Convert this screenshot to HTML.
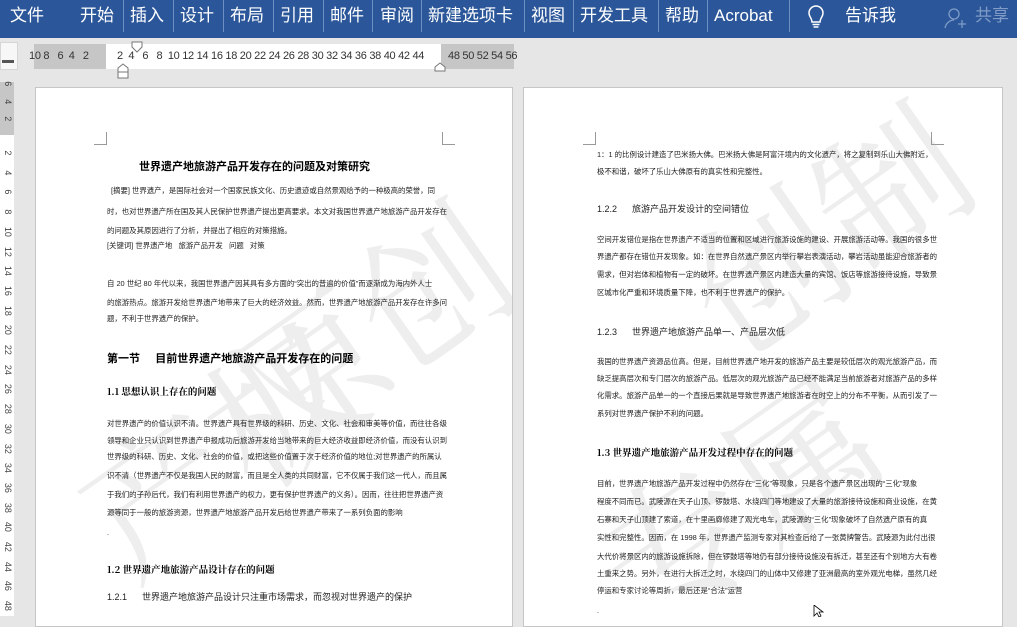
<!DOCTYPE html>
<html><head><meta charset="utf-8"><style>
*{margin:0;padding:0;box-sizing:border-box}
body{width:1017px;height:616px;overflow:hidden;background:#e6e6e6;position:relative;font-family:"Liberation Sans","Noto Sans CJK SC",sans-serif}
.rib{position:absolute;left:0;top:0;width:1017px;height:38px;background:#2b579a}
.tab{position:absolute;top:5px;color:#fff;font-size:17px;line-height:22px;white-space:nowrap}
.sep{position:absolute;top:0;width:1px;height:32px;background:#6d8fc2}
.ab{position:absolute;white-space:nowrap}
.rn{position:absolute;top:50px;font-size:11px;color:#333;white-space:nowrap;letter-spacing:-0.3px}
.page{position:absolute;top:87px;background:#fff;border:1px solid #c6c6c6;height:540px}
.t{position:absolute;font-size:7.4px;color:#222;white-space:nowrap;line-height:10px}
.h{position:absolute;white-space:nowrap;color:#000;font-weight:bold}
.wm{position:absolute;color:#eeeeee;font-size:150px;font-family:"Noto Serif CJK SC",serif;white-space:nowrap;transform:rotate(-35deg);line-height:1}
.cm{position:absolute;border-color:#999;border-style:solid;width:13px;height:13px}
.vr div{transform:rotate(90deg)}
</style></head><body>
<div class="rib">
<div class="tab" style="left:10px">文件</div>
<div class="tab" style="left:80px">开始</div><div class="sep" style="left:123px"></div>
<div class="tab" style="left:130px">插入</div><div class="sep" style="left:173px"></div>
<div class="tab" style="left:180px">设计</div><div class="sep" style="left:223px"></div>
<div class="tab" style="left:230px">布局</div><div class="sep" style="left:273px"></div>
<div class="tab" style="left:280px">引用</div><div class="sep" style="left:323px"></div>
<div class="tab" style="left:330px">邮件</div><div class="sep" style="left:372px"></div>
<div class="tab" style="left:380px">审阅</div><div class="sep" style="left:421px"></div>
<div class="tab" style="left:428px">新建选项卡</div><div class="sep" style="left:524px"></div>
<div class="tab" style="left:531px">视图</div><div class="sep" style="left:573px"></div>
<div class="tab" style="left:580px">开发工具</div><div class="sep" style="left:658px"></div>
<div class="tab" style="left:665px">帮助</div><div class="sep" style="left:707px"></div>
<div class="tab" style="left:714px">Acrobat</div><div class="sep" style="left:789px"></div>
<svg class="ab" style="left:806px;top:5px" width="20" height="24" viewBox="0 0 20 24"><path d="M6 17c0-4-3-5-3-9a7 7 0 0 1 14 0c0 4-3 5-3 9z M6.5 19.5h7 M7.5 22h5" fill="none" stroke="#fff" stroke-width="1.5"/></svg>
<div class="tab" style="left:845px">告诉我</div>
<svg class="ab" style="left:943px;top:6px" width="24" height="24" viewBox="0 0 24 24"><circle cx="11" cy="8" r="5" fill="none" stroke="#7f9bc6" stroke-width="1.3"/><path d="M2 22c1-5 5-8 9-8 M15 18h8 M19 14v8" fill="none" stroke="#7f9bc6" stroke-width="1.3"/></svg>
<div class="tab" style="left:975px;color:#7f9bc6">共享</div>
</div>
<div class="ab" style="left:0;top:42px;width:18px;height:28px;background:#f7f7f7;border:1px solid #d6d6d6"></div>
<div class="ab" style="left:2px;top:60px;width:12px;height:3px;background:#555"></div>
<div class="ab" style="left:34px;top:44px;width:72px;height:25px;background:#c6c6c6"></div>
<div class="ab" style="left:106px;top:44px;width:335px;height:25px;background:#fff"></div>
<div class="ab" style="left:441px;top:44px;width:73px;height:25px;background:#c6c6c6"></div>
<div class="rn" style="left:29px">10 8 &nbsp; 6 &nbsp;4 &nbsp; 2</div>
<div class="rn" style="left:117px">2 &nbsp;4 &nbsp; 6 &nbsp; 8 &nbsp;10 12 14 16 18 20 22 24 26 28 30 32 34 36 38 40 42 44</div>
<div class="rn" style="left:448px">48 50 52 54 56</div>
<svg class="ab" style="left:115px;top:41px" width="30" height="38"><path d="M17 1h10v5l-5 5-5-5z" fill="#fff" stroke="#777"/><path d="M3 27l5-4 5 4v4H3z M3 31h10v6H3z" fill="#fff" stroke="#777"/></svg>
<svg class="ab" style="left:433px;top:60px" width="16" height="12"><path d="M2 11V7l5-4 5 4v4z" fill="#fff" stroke="#777"/></svg>
<div class="ab" style="left:0;top:82px;width:14px;height:53px;background:#c6c6c6"></div>
<div class="ab" style="left:0;top:135px;width:14px;height:481px;background:#fff"></div>
<div class="vr" style="position:absolute;left:1px;top:75px;width:12px;font-size:9px;color:#444;line-height:17.5px;text-align:center">
<div>6</div><div>4</div><div>2</div>
</div>
<div class="vr" style="position:absolute;left:1px;top:143px;width:12px;font-size:9px;color:#444;line-height:19.7px;text-align:center">
<div>2</div><div>4</div><div>6</div><div>8</div><div>10</div><div>12</div><div>14</div><div>16</div><div>18</div><div>20</div><div>22</div><div>24</div><div>26</div><div>28</div><div>30</div><div>32</div><div>34</div><div>36</div><div>38</div><div>40</div><div>42</div><div>44</div><div>46</div><div>48</div>
</div>
<div class="page" style="left:35px;width:478px;overflow:hidden">
<div class="wm" style="left:30px;top:280px">产权</div>
<div class="wm" style="left:180px;top:160px">原创</div>
</div>
<div class="cm" style="left:94px;top:132px;border-width:0 1px 1px 0"></div>
<div class="cm" style="left:442px;top:132px;border-width:0 0 1px 1px"></div>
<div class="h" style="left:139px;top:158px;font-size:11px">世界遗产地旅游产品开发存在的问题及对策研究</div>
<div class="t" style="left:111px;top:186px">[摘要] 世界遗产，是国际社会对一个国家民族文化、历史遗迹或自然景观给予的一种极高的荣誉，同</div>
<div class="t" style="left:107px;top:207px">时，也对世界遗产所在国及其人民保护世界遗产提出更高要求。本文对我国世界遗产地旅游产品开发存在</div>
<div class="t" style="left:107px;top:226px">的问题及其原因进行了分析，并提出了相应的对策措施。</div>
<div class="t" style="left:107px;top:241px">[关键词] 世界遗产地 &nbsp; 旅游产品开发 &nbsp; 问题 &nbsp; 对策</div>
<div class="t" style="left:107px;top:279px">自 20 世纪 80 年代以来，我国世界遗产因其具有多方面的“突出的普遍的价值”而逐渐成为海内外人士</div>
<div class="t" style="left:107px;top:298px">的旅游热点。旅游开发给世界遗产地带来了巨大的经济效益。然而，世界遗产地旅游产品开发存在许多问</div>
<div class="t" style="left:107px;top:314px">题，不利于世界遗产的保护。</div>
<div class="h" style="left:107px;top:350px;font-size:11px">第一节&nbsp;&nbsp;&nbsp;&nbsp; 目前世界遗产地旅游产品开发存在的问题</div>
<div class="h" style="left:107px;top:384px;font-size:9.5px;font-family:'Noto Serif CJK SC',serif">1.1 思想认识上存在的问题</div>
<div class="t" style="left:107px;top:419px">对世界遗产的价值认识不清。世界遗产具有世界级的科研、历史、文化、社会和审美等价值，而往往各级</div>
<div class="t" style="left:107px;top:436px">领导和企业只认识到世界遗产申报成功后旅游开发给当地带来的巨大经济收益即经济价值，而没有认识到</div>
<div class="t" style="left:107px;top:452px">世界级的科研、历史、文化、社会的价值，或把这些价值置于次于经济价值的地位;对世界遗产的所属认</div>
<div class="t" style="left:107px;top:471px">识不清（世界遗产不仅是我国人民的财富，而且是全人类的共同财富，它不仅属于我们这一代人，而且属</div>
<div class="t" style="left:107px;top:490px">于我们的子孙后代，我们有利用世界遗产的权力，更有保护世界遗产的义务）。因而，往往把世界遗产资</div>
<div class="t" style="left:107px;top:508px">源等同于一般的旅游资源，世界遗产地旅游产品开发后给世界遗产带来了一系列负面的影响</div>
<div class="t" style="left:107px;top:528px">.</div>
<div class="h" style="left:107px;top:562px;font-size:9.5px;font-family:'Noto Serif CJK SC',serif">1.2 世界遗产地旅游产品设计存在的问题</div>
<div class="t" style="left:107px;top:591px;font-size:9px;line-height:12px">1.2.1&nbsp;&nbsp;&nbsp;&nbsp;&nbsp; 世界遗产地旅游产品设计只注重市场需求，而忽视对世界遗产的保护</div>
<div class="page" style="left:523px;width:480px;overflow:hidden">
<div class="wm" style="left:150px;top:60px">创制</div>
<div class="wm" style="left:60px;top:330px">专属</div>
</div>
<div class="cm" style="left:583px;top:132px;border-width:0 1px 1px 0"></div>
<div class="cm" style="left:931px;top:132px;border-width:0 0 1px 1px"></div>
<div class="t" style="left:597px;top:150px">1：1 的比例设计建造了巴米扬大佛。巴米扬大佛是阿富汗境内的文化遗产，将之复制到乐山大佛附近，</div>
<div class="t" style="left:597px;top:167px">极不和谐，破坏了乐山大佛原有的真实性和完整性。</div>
<div class="t" style="left:597px;top:203px;font-size:9px;line-height:12px">1.2.2&nbsp;&nbsp;&nbsp;&nbsp;&nbsp; 旅游产品开发设计的空间错位</div>
<div class="t" style="left:597px;top:235px">空间开发错位是指在世界遗产不适当的位置和区域进行旅游设施的建设、开展旅游活动等。我国的很多世</div>
<div class="t" style="left:597px;top:252px">界遗产都存在错位开发现象。如：在世界自然遗产景区内举行攀岩表演活动，攀岩活动虽能迎合旅游者的</div>
<div class="t" style="left:597px;top:270px">需求，但对岩体和植物有一定的破坏。在世界遗产景区内建造大量的宾馆、饭店等旅游接待设施，导致景</div>
<div class="t" style="left:597px;top:288px">区城市化严重和环境质量下降，也不利于世界遗产的保护。</div>
<div class="t" style="left:597px;top:326px;font-size:9px;line-height:12px">1.2.3&nbsp;&nbsp;&nbsp;&nbsp;&nbsp; 世界遗产地旅游产品单一、产品层次低</div>
<div class="t" style="left:597px;top:357px">我国的世界遗产资源品位高。但是，目前世界遗产地开发的旅游产品主要是较低层次的观光旅游产品，而</div>
<div class="t" style="left:597px;top:374px">缺乏提高层次和专门层次的旅游产品。低层次的观光旅游产品已经不能满足当前旅游者对旅游产品的多样</div>
<div class="t" style="left:597px;top:391px">化需求。旅游产品单一的一个直接后果就是导致世界遗产地旅游者在时空上的分布不平衡，从而引发了一</div>
<div class="t" style="left:597px;top:409px">系列对世界遗产保护不利的问题。</div>
<div class="h" style="left:597px;top:445px;font-size:9.5px;font-family:'Noto Serif CJK SC',serif">1.3 世界遗产地旅游产品开发过程中存在的问题</div>
<div class="t" style="left:597px;top:479px">目前，世界遗产地旅游产品开发过程中仍然存在“三化”等现象，只是各个遗产景区出现的“三化”现象</div>
<div class="t" style="left:597px;top:497px">程度不同而已。武陵源在天子山顶、锣鼓塔、水绕四门等地建设了大量的旅游接待设施和商业设施，在黄</div>
<div class="t" style="left:597px;top:515px">石寨和天子山顶建了索道，在十里画廊修建了观光电车，武陵源的“三化”现象破坏了自然遗产原有的真</div>
<div class="t" style="left:597px;top:533px">实性和完整性。因而，在 1998 年，世界遗产监测专家对其检查后给了一张黄牌警告。武陵源为此付出很</div>
<div class="t" style="left:597px;top:552px">大代价将景区内的旅游设施拆除，但在锣鼓塔等地仍有部分接待设施没有拆迁，甚至还有个别地方大有卷</div>
<div class="t" style="left:597px;top:569px">土重来之势。另外，在进行大拆迁之时，水绕四门的山体中又修建了亚洲最高的室外观光电梯，虽然几经</div>
<div class="t" style="left:597px;top:586px">停运和专家讨论等周折，最后还是“合法”运营</div>
<div class="t" style="left:597px;top:606px">.</div>
<svg class="ab" style="left:813px;top:605px" width="12" height="12"><path d="M1 0v11l3-3 2 4 2-1-2-4h4z" fill="#fff" stroke="#000" stroke-width="0.8"/></svg>
</body></html>
